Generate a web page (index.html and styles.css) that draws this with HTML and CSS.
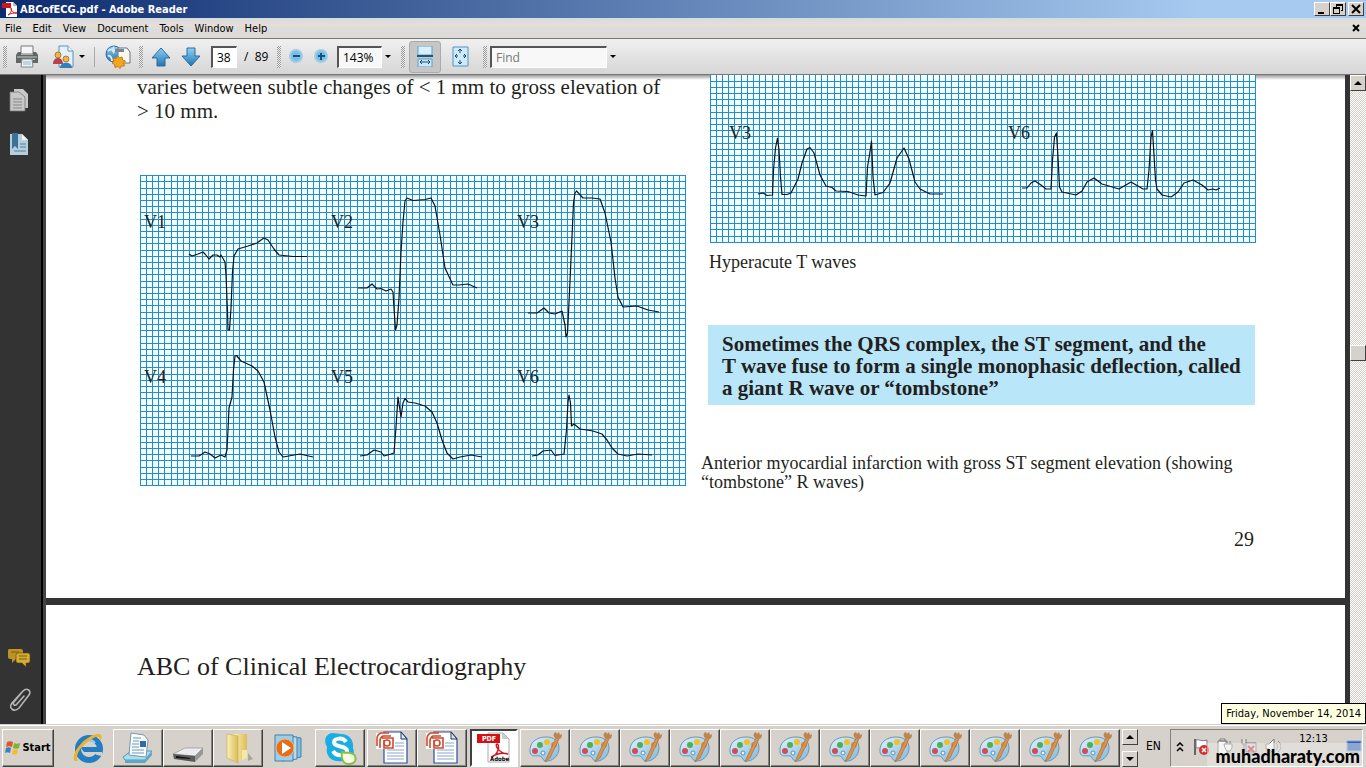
FILE: index.html
```html
<!DOCTYPE html>
<html lang="en">
<head>
  <meta charset="UTF-8">
  <meta name="viewport" content="width=device-width, initial-scale=1.0">
  <title>ABCofECG.pdf - Adobe Reader</title>
  <link rel="stylesheet" href="styles.css">
</head>
<body>
  <!-- shared icons -->
  <svg class="defs" width="0" height="0" aria-hidden="true">
    <defs>
      <linearGradient id="blue" x1="0" y1="0" x2="0" y2="1">
        <stop offset="0" stop-color="#8fd0f4"/><stop offset="1" stop-color="#1f74b8"/>
      </linearGradient>
      <linearGradient id="glass" x1="0" y1="0" x2="1" y2="1">
        <stop offset="0" stop-color="#e4f3fb"/><stop offset="1" stop-color="#7fb8dd"/>
      </linearGradient>
      <linearGradient id="folder" x1="0" y1="0" x2="1" y2="0">
        <stop offset="0" stop-color="#fbf0b4"/><stop offset="1" stop-color="#dcbc58"/>
      </linearGradient>
      <pattern id="gridA" x="140" y="175" width="31" height="31" patternUnits="userSpaceOnUse">
        <rect width="31" height="31" fill="#f2fffe"/>
        <path d="M0 0h1v31h-1zM6 0h1v31h-1zM12 0h1v31h-1zM18 0h1v31h-1zM24 0h1v31h-1zM0 0h31v1h-31zM0 6h31v1h-31zM0 13h31v1h-31zM0 19h31v1h-31zM0 25h31v1h-31z" fill="#208ed6"/>
      </pattern>
      <pattern id="gridB" x="710" y="56" width="31" height="31" patternUnits="userSpaceOnUse">
        <rect width="31" height="31" fill="#f2fffe"/>
        <path d="M0 0h1v31h-1zM6 0h1v31h-1zM12 0h1v31h-1zM18 0h1v31h-1zM24 0h1v31h-1zM0 0h31v1h-31zM0 6h31v1h-31zM0 12h31v1h-31zM0 18h31v1h-31zM0 25h31v1h-31z" fill="#208ed6"/>
      </pattern>
      <symbol id="paint" viewBox="0 0 34 34">
        <path d="M2 21C1 12 8 6 18 6c8 0 13 4 13 11 0 8-7 14-14 13-3-1-2-4-5-5-4-1-9 2-10-4z" fill="url(#glass)" stroke="#6796b8"/>
        <circle cx="7" cy="20" r="3" fill="#c8505c"/><circle cx="12" cy="14" r="3" fill="#4fae5a"/>
        <circle cx="19" cy="11" r="3" fill="#f0c02c"/><circle cx="26" cy="14" r="3" fill="#e88a32"/>
        <circle cx="15" cy="22" r="2" fill="#e8f4fc" stroke="#5590c0"/>
        <path d="M17 31l2-5L28 7l3 1-9 19z" fill="#d9934f" stroke="#a8682e" stroke-width=".6"/>
        <path d="M27 7c-2-2-2-5 1-6l1 2 2-2 1 3 2-1c0 3-1 5-3 5z" fill="#bd8550"/>
      </symbol>
      <symbol id="ppt" viewBox="0 0 34 34">
        <path d="M9 1h17l6 7v24H9z" fill="#fff" stroke="#2c4f9e" stroke-width="1.2"/>
        <path d="M26 1v7h6z" fill="#dce6f6" stroke="#1c3464"/>
        <path d="M12 19h17M12 22h17M12 25h17M12 28h17M20 12h9M20 15h9" stroke="#8aa5d4"/>
        <path d="M1 2h15v16H1z" fill="#fff"/>
        <path d="M14 2H6C3 3 2 5 2 8v7M16 5H8C6 6 5 8 5 10v7M7 7h11v10H9V9" fill="none" stroke="#d04a30" stroke-width="1.6"/>
        <circle cx="12" cy="12" r="3" fill="#fff" stroke="#d04a30" stroke-width="1.6"/>
      </symbol>
      <symbol id="page" viewBox="0 0 20 24">
        <path d="M5 1h9l5 5v14H5z" fill="#c8c8c8"/><path d="M1 4h9l6 5v14H1z" fill="#c8c8c8" stroke="#777" stroke-width=".8"/>
        <path d="M4 11h9M4 14h9M4 17h9M4 20h9" stroke="#858585"/>
      </symbol>
    </defs>
  </svg>

  <header class="titlebar">
    <svg class="app-icon" width="16" height="16" viewBox="0 0 16 16">
      <path d="M4 1h7l4 4v11H4z" fill="#fff"/><path d="M11 1v4h4z" fill="#bbb"/>
      <path d="M0 2h9v5H0z" fill="#d5131c"/>
      <path d="M6 14c3-2 4-5 3-7 0 3 2 5 6 5-3 0-6 0-9 2z" fill="none" stroke="#d5131c"/>
    </svg>
    <h1>ABCofECG.pdf - Adobe Reader</h1>
    <div class="window-buttons">
      <button aria-label="Minimize"><svg width="10" height="10"><path d="M1 8h6v2H1z"/></svg></button>
      <button aria-label="Restore"><svg width="10" height="10"><path d="M3 0h7v7H8V6h1V2H4v1H3z"/><path d="M0 3h7v7H0zM1 5v4h5V5z" fill-rule="evenodd"/></svg></button>
      <button class="close" aria-label="Close"><svg width="10" height="10"><path d="M1 1l8 8M9 1l-8 8" stroke="#000" stroke-width="2"/></svg></button>
    </div>
  </header>

  <nav class="menubar">
    <button>File</button>
    <button>Edit</button>
    <button>View</button>
    <button>Document</button>
    <button>Tools</button>
    <button>Window</button>
    <button>Help</button>
    <button class="close-doc" aria-label="Close document"><svg width="8" height="8"><path d="M1 1l6 6M7 1l-6 6" stroke="#000" stroke-width="2"/></svg></button>
  </nav>

  <div class="toolbar">
    <span class="grip"></span>
    <button class="tool print" aria-label="Print">
      <svg width="22" height="24" viewBox="0 0 22 24">
        <path d="M5 1h12v8H5z" fill="#f6f6f6" stroke="#777"/>
        <path d="M2 7h3v3h12V7h3l2 3v8H0v-8z" fill="#606567"/>
        <path d="M1 11h20v2H1z" fill="#939a9c"/><path d="M16 14h3v1h-3z" fill="#b7e0a0"/>
        <path d="M6 14h10l1 8H5z" fill="#e9f2f7" stroke="#888"/><path d="M7 17h8M7 19h8" stroke="#9ab6c8"/>
      </svg>
    </button>
    <button class="tool share" aria-label="Collaborate">
      <svg width="22" height="24" viewBox="0 0 22 24">
        <path d="M7 1h9l5 5v16H7z" fill="#e6f2fb" stroke="#5794c4"/><path d="M16 1v5h5" fill="#fff" stroke="#5794c4"/>
        <circle cx="6" cy="10" r="3" fill="#eab354" stroke="#b47a28"/><path d="M1 19c0-8 10-8 10 0z" fill="#b8404f"/>
        <circle cx="14" cy="14" r="3" fill="#eab354" stroke="#b47a28"/><path d="M8 23c0-7 12-7 12 0z" fill="#347fb9"/>
      </svg>
      <i class="caret"></i>
    </button>
    <span class="divider"></span>
    <button class="tool web" aria-label="Create PDF online">
      <svg width="26" height="24" viewBox="0 0 26 24">
        <circle cx="9" cy="9" r="8" fill="url(#blue)" stroke="#38719f"/><path d="M3 6c4-4 5 1 8-1M3 11c3-1 4 3 4 5M8 2c2 2-2 3 1 6" stroke="#d7edf8" fill="none" stroke-width="2"/>
        <path d="M13 3h9l3 4v11H13z" fill="#f8f8f4" stroke="#6f7476"/><path d="M10 4h9v3h-9z" fill="#768591"/>
        <path d="M13 11l1.500 2 2.500-1 .5 3 3 1-2 2 1 3-3 0-1.500 2.500-2-2-3 1-.5-3-2.500-1.500 2-2-1-3 3 .5z" fill="#f3a51e" stroke="#c77e10"/>
      </svg>
    </button>
    <span class="grip"></span>
    <button class="tool arrow" aria-label="Previous page"><svg width="20" height="20" viewBox="0 0 20 20"><path d="M10 1l9 10h-5v8H6v-8H1z" fill="url(#blue)" stroke="#286c9c"/></svg></button>
    <button class="tool arrow" aria-label="Next page"><svg width="20" height="20" viewBox="0 0 20 20"><path d="M10 19l9-10h-5V1H6v8H1z" fill="url(#blue)" stroke="#286c9c"/></svg></button>
    <input class="page-no" type="text" value="38" aria-label="Page number">
    <span class="page-total">/&nbsp; 89</span>
    <span class="grip"></span>
    <button class="tool zoom" aria-label="Zoom out"><svg width="15" height="15" viewBox="0 0 15 15"><circle cx="7" cy="7" r="6" fill="#79bde9" stroke="#a3cbe3" stroke-width="2"/><path d="M4 6h7v2H4z" fill="#155282"/></svg></button>
    <button class="tool zoom" aria-label="Zoom in"><svg width="15" height="15" viewBox="0 0 15 15"><circle cx="7" cy="7" r="6" fill="#79bde9" stroke="#a3cbe3" stroke-width="2"/><path d="M4 6h2V4h2v2h3v2H8v3H6V8H4z" fill="#155282"/></svg></button>
    <input class="zoom-level" type="text" value="143%" aria-label="Zoom">
    <button class="drop" aria-label="Zoom levels"><i class="caret"></i></button>
    <span class="grip"></span>
    <button class="tool fit pressed" aria-label="Fit width">
      <svg width="17" height="21" viewBox="0 0 17 21"><path d="M1 0h14v9H1z" fill="#d8effc" stroke="#5d9fc9"/><path d="M0 9h16v2H0z" fill="#1c5780"/><path d="M1 13h14v8H1z" fill="#c9e8f9" stroke="#5d9fc9"/><path d="M3 16h10M5 14l-2 2 2 2M11 14l2 2-2 2" fill="none" stroke="#174a70"/></svg>
    </button>
    <button class="tool fit" aria-label="Fit page">
      <svg width="17" height="21" viewBox="0 0 17 21"><path d="M1 1h15v19H1z" fill="#cfeafa" stroke="#5694bd"/><path d="M6 5l2-2 2 2M6 16l2 2 2-2M5 8l-2 2 2 2M12 8l2 2-2 2M8 3v4M8 14v4M3 10h3M11 10h3" fill="none" stroke="#174a70"/></svg>
    </button>
    <span class="grip"></span>
    <input class="find" type="text" placeholder="Find" aria-label="Find">
    <button class="drop" aria-label="Find options"><i class="caret"></i></button>
  </div>

  <main class="viewer">
    <aside class="sidebar">
      <button aria-label="Pages"><svg width="20" height="24"><use href="#page"/></svg></button>
      <button aria-label="Bookmarks">
        <svg width="20" height="24" viewBox="0 0 20 24"><path d="M1 2h12l6 6v15H1z" fill="#b5cedd"/><path d="M13 2v6h6z" fill="#eef5f9"/><path d="M3 1h6v16l-3-3-3 3z" fill="#3a7297"/><path d="M11 12h6M11 15h6M5 19h12" stroke="#53809d"/></svg>
      </button>
      <button class="comments" aria-label="Comments">
        <svg width="24" height="20" viewBox="0 0 24 20"><path d="M2 1h12q2 0 2 2v6q0 2-2 2H9l-4 4v-4H3q-2 0-2-2V3q0-2 1-2z" fill="#bd9422"/><path d="M11 5h10q2 0 2 2v6q0 2-2 2h-2v4l-4-4h-4q-2 0-2-2V7q0-2 2-2z" fill="#d8ad34" stroke="#54430f" stroke-width=".6"/><path d="M4 4h8M12 8h8M12 11h8" stroke="#765c14"/></svg>
      </button>
      <button aria-label="Attachments">
        <svg width="22" height="24" viewBox="0 0 22 24"><path d="M15 8l-7 8c-2 3-5 0-3-2l9-11c4-4 9 0 6 4L10 20c-5 5-11 0-7-5L13 4" fill="none" stroke="#b4b4b4" stroke-width="1.6" stroke-linecap="round"/></svg>
      </button>
    </aside>

    <div class="pages">
      <article class="page page-29">
        <section class="col-left">
          <p class="body-text">varies between subtle changes of &lt; 1 mm to gross elevation of<br>&gt; 10 mm.</p>
          <svg class="ecg" width="547" height="311" viewBox="140 175 547 311" role="img" aria-label="Leads V1 to V6">
            <rect x="140" y="175" width="546" height="311" fill="url(#gridA)"/>
            <g class="lead">
              <text x="144" y="228">V1</text><text x="331" y="228">V2</text><text x="517" y="228">V3</text>
              <text x="144" y="383">V4</text><text x="331" y="383">V5</text><text x="517" y="383">V6</text>
            </g>
            <g class="trace">
              <polyline points="189,254 192,256 198,254 203,252 205,254 209,259 213,255 217,255 220,257 221,255 225,262 226,275 227.5,312 228,330 229.5,330 231,308 232.5,272 234,256 238,249 248,246 257,243 261,240 264,238 268,240 274,249 279,255 293,256.5 307,256.5"/>
              <polyline points="358,288 367,288 372,284 377,289 381,288.5 386,291 391,289 393,292 394,308 395.5,330 397,325 399,298 401,252 403,222 405,201 407,198 413,200.5 425,199.5 431,198 435,206 440,235 445,268 452,283 453,285 459,285 468,284 477,288"/>
              <polyline points="528,313 537,313 544,308 549,313 555,314 562,311 565,325 566,337 567.5,333 569.5,292 571.5,248 573.5,203 575,193 576.5,191 583,198 592,198 600,199 605,213 611,242 615,278 618,297 623,307 637,306 648,310 659,312"/>
              <polyline points="191,456 199,456 205,452 210,454 215,458 221,455 225,457 227,450 228,430 229,408 232,397 233.5,370 235,356 236.5,355.5 241,361 252,366 258,371 264,382 270,410 275,437 279,452 283,457 300,454 313,457"/>
              <polyline points="360,456 367,455 374,450 381,452 384,456 391,454 394,453 396,427 398,397 399.5,407 401,417 403,403 405,398.5 408,402 415,403 425,406 432,412 437,423 442,440 447,453 453,459 460,457 471,455 482,457"/>
              <polyline points="532,456 538,455 543,451 551,450 555,455.5 564,454 566.5,430 568,402 569,395 570.5,403 571.5,426 574,424 580,429 593,431 602,434 607,440 612,448 618,454 627,456 638,454 652,455"/>
            </g>
          </svg>
        </section>

        <section class="col-right">
          <svg class="ecg" width="547" height="168" viewBox="710 75 547 168" role="img" aria-label="Leads V3 and V6">
            <rect x="710" y="75" width="546" height="168" fill="url(#gridB)"/>
            <g class="lead">
              <text x="729" y="139">V3</text><text x="1008" y="139">V6</text>
            </g>
            <g class="trace">
              <polyline points="758,194 763,193 767,195.5 772.5,195 773.5,170 775.5,148 777.5,138 779,150 780.5,177 782,194.5 787,194.5 791,193 798,179 802,163 807,149 810,147.5 814,153 820,175 826,186 832,187.5 836,191 848,191.5 858,195 866,196 867.5,167 869.5,155 871.5,141 873,177 875,195 883,192.5 890,183 897,158 904,148 909,159 915,182 920,189 930,194 943,194"/>
              <polyline points="1022,188 1027,188 1031,183 1035,181 1041,185 1046,189 1051,189 1052.5,160 1054.5,137 1056.5,133 1058,157 1059.5,187 1062,192 1076,195 1082,191 1087,182 1094,178 1102,184 1119,189 1131,182 1143,189 1147,189 1149,170 1151,137 1152.5,130.5 1153.5,147 1155.5,180 1157,189 1162,195 1171,197 1178,192 1184,183 1193,180 1202,185 1208,190 1213,189 1216,190 1220,188"/>
            </g>
          </svg>
          <p class="caption first">Hyperacute T waves</p>
          <p class="note">Sometimes the QRS complex, the ST segment, and the<br>T wave fuse to form a single monophasic deflection, called<br>a giant R wave or “tombstone”</p>
          <p class="caption">Anterior myocardial infarction with gross ST segment elevation (showing<br>“tombstone” R waves)</p>
          <p class="folio">29</p>
        </section>
      </article>
      <article class="page page-30">
        <h2>ABC of Clinical Electrocardiography</h2>
      </article>
    </div>

    <div class="scrollbar">
      <button aria-label="Scroll up"><i class="tri up"></i></button>
      <span class="above"></span>
      <span class="thumb"></span>
      <span class="below"></span>
      <button aria-label="Scroll down"><i class="tri down"></i></button>
    </div>
  </main>

  <footer class="taskbar">
    <button class="start">
      <svg width="16" height="16" viewBox="0 0 16 16"><path d="M2 2c2-1 4-1 6 0L7 7C5 6 3 6 1 7z" fill="#e2542a"/><path d="M9 3c2 1 4 1 6 0l-1 5c-2 1-4 1-6 0z" fill="#7cb43a"/><path d="M1 8c2-1 4-1 5 0l-1 5c-2-1-3-1-5 0z" fill="#3b7ec8"/><path d="M8 9c2 1 3 1 5 0l-1 5c-2 1-3 1-5 0z" fill="#f4bd2a"/></svg>
      Start
    </button>
    <button class="task flat ie" aria-label="Internet Explorer">
      <svg width="34" height="34" viewBox="0 0 34 34"><circle cx="18" cy="18" r="11" fill="none" stroke="#237dc2" stroke-width="6"/><path d="M9 16h20v5H13z" fill="#237dc2"/><path d="M20 21h11v4l-5-1z" fill="#d4d0c8"/><path d="M12 12c4-4 9-4 12 0" stroke="#8fd0f4" stroke-width="2" fill="none"/><path d="M4 30C-2 24 14 4 27 3c5 0 4 4 2 8 1-5-2-7-8-3C11 14 3 24 7 30z" fill="#edb22f"/></svg>
    </button>
    <button class="task" aria-label="Document">
      <svg width="34" height="34" viewBox="0 0 34 34"><path d="M2 26l8-6h21l-7 9H4z" fill="#a8dcf0" stroke="#5796b4"/><path d="M4 29h20l7-8v3l-7 8H4z" fill="#5ea5c6"/><path d="M10 2l13 2 4 5-2 17-17-2z" fill="#f8fcff" stroke="#7899ac"/><path d="M12 7h8M12 10h6M11 13h7M11 16h7M11 19h12M11 22h12" stroke="#6d9ab6"/><path d="M19 10h6v6h-6z" fill="#306bab"/></svg>
    </button>
    <button class="task" aria-label="Drive">
      <svg width="34" height="34" viewBox="0 0 34 34"><path d="M2 23l12-6h18l-8 8z" fill="#ececec" stroke="#888" stroke-width=".6"/><path d="M2 23l22 2v6L3 28z" fill="#5b5b5b"/><path d="M24 25l8-8v6l-8 8z" fill="#989898"/><path d="M5 25l14 2v1L5 27z" fill="#111"/></svg>
    </button>
    <button class="task" aria-label="Folder">
      <svg width="34" height="34" viewBox="0 0 34 34"><path d="M13 3h13v24l-13 4z" fill="url(#folder)"/><path d="M6 3l11 2v27L6 27z" fill="url(#folder)" stroke="#c6a94f" stroke-width=".6"/><path d="M21 19h5v8l-5 2z" fill="#f6e9a2"/><path d="M27 22l5 6-5 2z" fill="#aaa69d"/></svg>
    </button>
    <button class="task flat media" aria-label="Media player">
      <svg width="30" height="30" viewBox="0 0 30 30"><path d="M12 3l16 2v19l-16 3z" fill="#83bedf" stroke="#4381aa"/><path d="M9 3l15 1v22l-15 2z" fill="#b8dcef" stroke="#4381aa"/><path d="M2 2h18v26H2z" fill="#9bcdec" stroke="#4381aa"/><circle cx="12" cy="15" r="9" fill="#e36f1b" stroke="#f6b678"/><path d="M9 9l9 6-9 6z" fill="#fff"/></svg>
    </button>
    <button class="task" aria-label="Skype">
      <svg width="34" height="34" viewBox="0 0 34 34"><path d="M9 2c4 0 6 1 9 1 8 0 13 6 12 14 3 7-2 14-10 13C9 32 2 25 4 16 0 9 3 3 9 2z" fill="#18aee5"/><path d="M23 11c-3-5-12-4-12 0 0 6 13 3 13 9 0 5-11 6-14 0" fill="none" stroke="#fff" stroke-width="4"/><path d="M19 21c5 2 10-1 13 4 2 6-2 8-6 8-6 0-8-5-7-12z" fill="#f7fce9" stroke="#8abf3e" stroke-width="2"/></svg>
    </button>
    <button class="task after-skype" aria-label="Presentation"><svg width="34" height="34"><use href="#ppt"/></svg></button>
    <button class="task" aria-label="Presentation"><svg width="34" height="34"><use href="#ppt"/></svg></button>
    <button class="task active" aria-label="ABCofECG.pdf">
      <svg width="34" height="34" viewBox="0 0 34 34"><path d="M11 2h15l6 6v23H11z" fill="#fff" stroke="#aaa"/><path d="M25 2v6h7z" fill="#ccc"/><path d="M0 3h23v9H0z" fill="#d31218"/><text x="5" y="10" class="pdf-label">PDF</text><path d="M14 26c8-2 9-13 6-13-3 1 3 10 11 10-6-2-12 0-17 3z" fill="none" stroke="#d31218" stroke-width="1.4"/><text x="13" y="30" class="adobe-label">Adobe</text></svg>
    </button>
    <button class="task after-pdf" aria-label="Paint"><svg width="34" height="34"><use href="#paint"/></svg></button>
    <button class="task" aria-label="Paint"><svg width="34" height="34"><use href="#paint"/></svg></button>
    <button class="task" aria-label="Paint"><svg width="34" height="34"><use href="#paint"/></svg></button>
    <button class="task" aria-label="Paint"><svg width="34" height="34"><use href="#paint"/></svg></button>
    <button class="task" aria-label="Paint"><svg width="34" height="34"><use href="#paint"/></svg></button>
    <button class="task" aria-label="Paint"><svg width="34" height="34"><use href="#paint"/></svg></button>
    <button class="task" aria-label="Paint"><svg width="34" height="34"><use href="#paint"/></svg></button>
    <button class="task" aria-label="Paint"><svg width="34" height="34"><use href="#paint"/></svg></button>
    <button class="task" aria-label="Paint"><svg width="34" height="34"><use href="#paint"/></svg></button>
    <button class="task" aria-label="Paint"><svg width="34" height="34"><use href="#paint"/></svg></button>
    <button class="task" aria-label="Paint"><svg width="34" height="34"><use href="#paint"/></svg></button>
    <button class="task" aria-label="Paint"><svg width="34" height="34"><use href="#paint"/></svg></button>

    <div class="task-scroll">
      <button aria-label="Previous row"><i class="tri up"></i></button>
      <button aria-label="Next row"><i class="tri down"></i></button>
    </div>
    <span class="lang">EN</span>

    <div class="tray">
      <svg class="chevrons" width="8" height="10" viewBox="0 0 8 10"><path d="M1 4l3-3 3 3M1 9l3-3 3 3" fill="none" stroke="#000" stroke-width="1.5"/></svg>
      <svg width="16" height="18" viewBox="0 0 16 18"><path d="M2 1v16" stroke="#666" stroke-width="2"/><path d="M3 2c4-1 5 2 11 0v8c-6 2-7-1-11 0z" fill="#fff" stroke="#777"/><circle cx="11" cy="12" r="5" fill="#d3302f"/><path d="M9 10l4 4M13 10l-4 4" stroke="#fff" stroke-width="1.5"/></svg>
      <svg width="16" height="18" viewBox="0 0 16 18"><path d="M1 3h9v14H1zM3 1h5v2H3z" fill="#fff" stroke="#777"/><path d="M7 6h8v4l-2 3h-3l-2-3zM9 3v3M13 3v3M11 13v4" fill="#fff" stroke="#777"/></svg>
      <svg width="16" height="18" viewBox="0 0 16 18"><path d="M5 5h10v9H5zM1 1v5h4V1M3 6v10h9" fill="#ddd" stroke="#777"/><path d="M7 8l6 6M13 8l-6 6" stroke="#d3302f" stroke-width="2"/></svg>
      <svg width="16" height="18" viewBox="0 0 16 18"><path d="M1 6h3l5-5v15l-5-5H1z" fill="#fff" stroke="#777"/><path d="M11 5c2 2 2 5 0 7M13 3c4 3 4 8 0 11" fill="none" stroke="#888"/></svg>
      <time class="clock">12:13</time>
      <svg class="desktop" width="16" height="18" viewBox="0 0 16 18"><path d="M1 3h14v10H1z" fill="#2c62b8" stroke="#7fa8e0"/><path d="M4 15h8" stroke="#777"/></svg>
      <span class="watermark">muhadharaty.com</span>
    </div>
    <div class="tooltip" role="tooltip">Friday, November 14, 2014</div>
  </footer>
</body>
</html>
```
FILE: styles.css
```css
* {
  box-sizing: border-box;
}
body {
  margin: 0;
  height: 100vh;
  display: flex;
  flex-direction: column;
  overflow: hidden;
  font-family: "DejaVu Sans Condensed", "DejaVu Sans", sans-serif;
  font-size: 11px;
  color: #000;
}
button {
  flex: none;
  padding: 0;
  border: none;
  background: none;
  font: inherit;
  color: inherit;
  display: flex;
  align-items: center;
  justify-content: center;
}
svg {
  display: block;
  flex: none;
}
.defs {
  position: absolute;
}

/* window chrome */
.titlebar {
  flex: none;
  height: 18px;
  display: flex;
  align-items: center;
  padding: 0 2px;
  gap: 2px;
  background: linear-gradient(90deg, #0c2a6e 0%, #a6caf0 88%);
  color: #fff;
}
.titlebar h1 {
  margin: 0;
  font-size: 11px;
  font-weight: bold;
}
.window-buttons {
  margin-left: auto;
  display: flex;
}
.window-buttons button {
  width: 16px;
  height: 14px;
}
.window-buttons .close {
  margin-left: 2px;
}
.window-buttons button,
.scrollbar button,
.thumb,
.task-scroll button {
  background: #d6d2cb;
  border: 1px solid;
  border-color: #fff #404040 #404040 #fff;
}
.menubar {
  flex: none;
  height: 20px;
  display: flex;
  align-items: center;
  gap: 11px;
  padding: 0 6px 0 5px;
  background: linear-gradient(#d4dbe2, #e7ded6 35%, #dadcdd 60%, #dedad6);
}
.close-doc {
  margin-left: auto;
}

/* toolbar */
.toolbar {
  flex: none;
  height: 37px;
  display: flex;
  align-items: center;
  padding-left: 3px;
  border-top: 1px solid #777;
  border-bottom: 1px solid #777;
  background: linear-gradient(#f0f0f0, #d6d6d6);
  font-family: "Open Sans", "Noto Sans", sans-serif;
  font-size: 12px;
}
.grip {
  flex: none;
  width: 4px;
  height: 22px;
  background: repeating-conic-gradient(#999 0 25%, #eee 0 50%) 0 0 / 2px 2px;
}
.print {
  margin-left: 9px;
}
.share {
  margin-left: 14px;
  gap: 5px;
}
.divider {
  width: 1px;
  height: 20px;
  margin: 0 10px 0 9px;
  background: #aaa;
}
.web {
  margin-right: 8px;
}
.arrow {
  margin-left: 8px;
  margin-right: 2px;
}
.caret {
  width: 0;
  height: 0;
  border: 3px solid transparent;
  border-top-color: #000;
  border-bottom: none;
}
.toolbar input {
  height: 22px;
  padding: 0 4px;
  border: 1px solid #fff;
  border-top: 2px solid #555;
  border-left: 2px solid #555;
  background: #f8f8f8;
  font: inherit;
}
.toolbar .page-no {
  width: 26px;
  margin-left: 8px;
  background: #fff;
}
.page-total {
  width: 24px;
  margin: 0 9px 0 7px;
  white-space: nowrap;
}
.zoom {
  margin-left: 8px;
  margin-right: 2px;
}
.zoom-level {
  width: 45px;
  margin-left: 6px;
}
.drop {
  width: 12px;
}
.drop + .grip {
  margin: 0 4px 0 7px;
}
.fit {
  width: 32px;
  height: 32px;
  margin-right: 3px;
  border-radius: 3px;
}
.fit.pressed {
  background: #c6c6c6;
  border: 1px solid #aaa;
}
.fit + .grip {
  margin: 0 3px 0 4px;
}
.find {
  width: 117px;
}
.find::placeholder {
  color: #777;
  opacity: 1;
}

/* document area */
.viewer {
  flex: 1;
  min-height: 0;
  display: flex;
  background: #333;
  overflow: hidden;
}
.sidebar {
  flex: none;
  width: 46px;
  display: flex;
  flex-direction: column;
  align-items: flex-start;
  gap: 20px;
  padding: 13px 0 12px 9px;
  background: linear-gradient(90deg, #333 41px, #000 41px, #000 43px, #444 43px);
}
.sidebar .comments {
  margin: auto 0 0 -2px;
}
.pages {
  flex: 1;
  min-width: 0;
  display: flex;
  flex-direction: column;
  gap: 7px;
}
.page {
  background: #fff;
  padding: 0 89px 0 91px;
  font-family: "Liberation Serif", serif;
  color: #231f20;
}
.page p,
.page h2 {
  margin: 0;
}
.page-29 {
  flex: none;
  display: flex;
  background: linear-gradient(#999, #fff 5px);
  white-space: nowrap;
}
.col-left {
  flex: none;
  width: 564px;
}
.col-right {
  flex: 1;
}
.body-text {
  font-size: 21px;
  line-height: 24px;
}
.col-left .ecg {
  margin: 52px 0 0 3px;
}
.col-right .ecg {
  margin-left: 9px;
}
.lead {
  font-size: 18px;
  fill: #231f20;
}
.trace {
  fill: none;
  stroke: #111;
  stroke-width: 1.2;
  stroke-linejoin: round;
}
.caption {
  font-size: 18px;
  line-height: 19px;
}
.caption.first {
  padding: 10px 0 0 8px;
}
.page .note {
  width: 547px;
  margin: 53px 0 49px 7px;
  padding: 8px 14px 6px;
  background: #b9e6f9;
  font-size: 21px;
  font-weight: bold;
  line-height: 22px;
}
.folio {
  padding: 35px 3px 47px 0;
  font-size: 20px;
  line-height: 24px;
  text-align: right;
}
.page-30 {
  flex: 1;
  padding-top: 46px;
}
.page-30 h2 {
  font-size: 26px;
  font-weight: normal;
  line-height: 32px;
}
.scrollbar {
  flex: none;
  width: 16px;
  margin-left: 5px;
  display: flex;
  flex-direction: column;
  background: repeating-conic-gradient(#fff 0 25%, #d4d0c8 0 50%) 0 0 / 2px 2px;
}
.scrollbar button,
.thumb {
  width: 16px;
  height: 16px;
}
.above {
  flex: 254;
}
.below {
  flex: 347;
}
.tri {
  width: 0;
  height: 0;
  border: 4px solid transparent;
}
.tri.up {
  border-bottom-color: #000;
  border-top: none;
}
.tri.down {
  border-top-color: #000;
  border-bottom: none;
}

/* taskbar */
.taskbar {
  position: relative;
  flex: none;
  height: 44px;
  display: flex;
  align-items: center;
  padding: 2px 3px 0 2px;
  border-top: 1px solid #d6d2cb;
  box-shadow: inset 0 1px #fff;
  background: #d6d2cb;
}
.start,
.task {
  height: 38px;
  border: 1px solid;
  border-color: #fff #404040 #404040 #fff;
  box-shadow: inset -1px -1px #85817b;
}
.start {
  width: 52px;
  gap: 1px;
  font-weight: bold;
}
.task {
  width: 50px;
}
.task.flat {
  border-color: transparent;
  box-shadow: none;
}
.ie {
  margin: 0 0 0 9px;
}
.media {
  margin-right: 2px;
}
.after-skype {
  margin-left: 2px;
}
.task.active {
  width: 48px;
  margin: 0 2px 0 3px;
  background: #fff;
  border: 2px solid #404040;
  border-right-color: #fff;
  border-bottom-color: #fff;
  box-shadow: none;
}
.pdf-label {
  font-size: 7px;
  font-weight: bold;
  fill: #fff;
}
.adobe-label {
  font-size: 6px;
  font-weight: bold;
}
.task-scroll {
  flex: none;
  height: 38px;
  margin-left: 2px;
  display: flex;
  flex-direction: column;
  justify-content: space-between;
}
.task-scroll button {
  width: 16px;
  height: 16px;
}
.lang {
  flex: none;
  width: 16px;
  margin: 0 7px 0 8px;
  padding-bottom: 4px;
  font-size: 12px;
}
.tray {
  position: relative;
  flex: 1;
  min-width: 0;
  height: 38px;
  margin-left: 1px;
  padding: 0 0 2px 5px;
  display: flex;
  align-items: center;
  gap: 8px;
  border: 1px solid;
  border-color: #85817b #fff #fff #85817b;
}
.chevrons {
  margin-right: 1px;
}
.clock {
  flex: 1;
  align-self: flex-start;
  padding-top: 2px;
  line-height: 14px;
  text-align: center;
}
.watermark {
  position: absolute;
  right: 0;
  bottom: 0;
  width: 155px;
  padding: 4px 2px 1px 0;
  background: rgba(236, 234, 232, 0.5);
  font-family: Lato, sans-serif;
  font-size: 18px;
  font-weight: 900;
  line-height: 18px;
  text-align: right;
}
.tooltip {
  position: absolute;
  right: 0;
  bottom: 44px;
  height: 21px;
  padding: 0 4px;
  border: 1px solid #000;
  background: #ffffe1;
  line-height: 19px;
}
```
